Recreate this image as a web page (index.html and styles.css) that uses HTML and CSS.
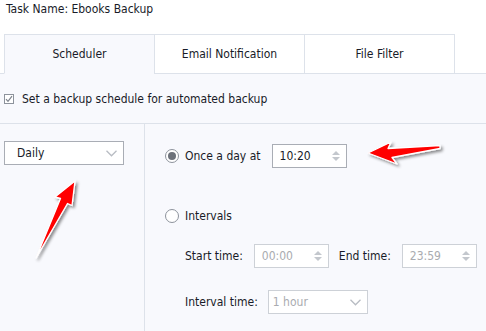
FILE: index.html
```html
<!DOCTYPE html>
<html lang="en">
<head>
    <meta charset="UTF-8">
    <meta name="viewport" content="width=device-width, initial-scale=1.0">
    <title>Ebooks Backup - Scheduler</title>
    <link rel="stylesheet" href="styles.css">
</head>
<body>
    <div class="task-name">Task Name: Ebooks Backup</div>

    <div class="tabs">
        <div class="tab active">Scheduler</div>
        <div class="tab">Email Notification</div>
        <div class="tab">File Filter</div>
    </div>

    <div class="panel">
        <div class="check-row">
            <span class="checkbox">
                <svg width="8" height="8" viewBox="0 0 8 8"><path d="M1 4.2 L3 6.3 L7 1.2" fill="none" stroke="#7c828b" stroke-width="1.2"/></svg>
            </span>
            Set a backup schedule for automated backup
        </div>

        <div class="schedule">
            <div class="side">
                <div class="select daily">
                    <span>Daily</span>
                    <svg class="chevron" width="11" height="7" viewBox="0 0 11 7"><path d="M0.5 0.8 L5.5 5.8 L10.5 0.8" fill="none" stroke="#b8bcc3" stroke-width="1.3"/></svg>
                </div>
            </div>

            <div class="options">
                <div class="row once">
                    <span class="radio checked"></span>
                    <span class="label">Once a day at</span>
                    <div class="timebox">
                        <span>10:20</span>
                        <span class="spin"><i class="up"></i><i class="down"></i></span>
                    </div>
                </div>

                <div class="row intervals">
                    <span class="radio"></span>
                    <span class="label">Intervals</span>
                </div>

                <div class="row sub range">
                    <span class="label">Start time:</span>
                    <div class="timebox disabled">
                        <span>00:00</span>
                        <span class="spin"><i class="up"></i><i class="down"></i></span>
                    </div>
                    <span class="label end-label">End time:</span>
                    <div class="timebox disabled">
                        <span>23:59</span>
                        <span class="spin"><i class="up"></i><i class="down"></i></span>
                    </div>
                </div>

                <div class="row sub interval">
                    <span class="label">Interval time:</span>
                    <div class="select disabled hour">
                        <span>1 hour</span>
                        <svg class="chevron" width="11" height="7" viewBox="0 0 11 7"><path d="M0.5 0.8 L5.5 5.8 L10.5 0.8" fill="none" stroke="#b8bcc3" stroke-width="1.3"/></svg>
                    </div>
                </div>
            </div>
        </div>
    </div>

    <!-- flechas rojas encima del contenido -->
    <svg class="arrows" width="486" height="331" viewBox="0 0 486 331">
        <defs>
            <filter id="sombra" x="-20%" y="-20%" width="140%" height="140%">
                <feDropShadow dx="2" dy="2" stdDeviation="1.6" flood-color="#000" flood-opacity="0.45"/>
            </filter>
        </defs>
        <polygon points="368,153 391,142 388,148.5 440,145.5 440,148.5 392,157.5 397,164"
                 fill="#ff0000" stroke="#fff" stroke-width="1.3" stroke-linejoin="round" filter="url(#sombra)"/>
        <polygon points="75,181 55,197 60.5,198.5 36,258 67.5,203.5 72,205.5"
                 fill="#ff0000" stroke="#fff" stroke-width="1.3" stroke-linejoin="round" filter="url(#sombra)"/>
    </svg>
</body>
</html>
```

FILE: styles.css
```css
body {
    font-family: 'DejaVu Sans Condensed', 'DejaVu Sans', sans-serif;
    font-size: 12px;
    color: #181b28;
    background-color: #fff;
    margin: 0;
    width: 486px;
    height: 331px;
    overflow: hidden;
    position: relative;
}

.task-name {
    padding: 1px 0 0 6px;
    line-height: 16px;
    height: 17px;
    box-sizing: border-box;
}

/* Pestañas */
.tabs {
    display: flex;
    margin-top: 17px;
    padding-left: 4px;
    height: 40px;
    box-sizing: border-box;
    border-bottom: 1px solid #dde2ea;
}

.tab {
    width: 151px;
    height: 40px;
    box-sizing: border-box;
    border: 1px solid #dde2ea;
    background: #fff;
    display: flex;
    align-items: center;
    justify-content: center;
}

.tab + .tab {
    margin-left: -1px;
}

.tab.active {
    background: #f8f9fd;
    border-bottom-color: #f8f9fd;
}

.panel {
    background: #f8f9fd;
    height: 257px;
}

.check-row {
    height: 50px;
    box-sizing: border-box;
    border-bottom: 1px solid #dde2ea;
    display: flex;
    align-items: center;
    padding: 1px 0 0 4px;
}

.checkbox {
    width: 10px;
    height: 10px;
    box-sizing: border-box;
    border: 1px solid #8d939c;
    background: #fff;
    display: inline-flex;
    align-items: center;
    justify-content: center;
    margin-right: 8px;
}

.schedule {
    display: flex;
    height: 207px;
}

.side {
    width: 145px;
    border-right: 1px solid #dde2ea;
    box-sizing: border-box;
    padding: 17px 0 0 4px;
}

.select, .timebox {
    height: 24px;
    box-sizing: border-box;
    border: 1px solid #a9adb5;
    background: #fff;
    display: flex;
    align-items: center;
    justify-content: space-between;
}

.select.daily {
    width: 120px;
    padding: 0 6px 0 12px;
}

.chevron {
    display: block;
}

.options {
    flex: 1;
    padding-left: 20px;
}

.row {
    display: flex;
    align-items: center;
    height: 24px;
}

.row.once {
    margin-top: 20px;
}

.row.intervals {
    margin-top: 36px;
}

.row.range {
    margin-top: 16px;
}

.row.interval {
    margin-top: 22px;
}

.row.sub {
    padding-left: 20px;
}

.radio {
    width: 14px;
    height: 14px;
    box-sizing: border-box;
    border: 1px solid #8d939c;
    border-radius: 50%;
    background: #fff;
    margin-right: 6px;
    display: inline-flex;
    align-items: center;
    justify-content: center;
}

.radio.checked::after {
    content: "";
    width: 8px;
    height: 8px;
    border-radius: 50%;
    background: #6c717a;
}

.once .timebox {
    margin-left: 11px;
}

.timebox {
    width: 75px;
    padding: 0 6px 0 7px;
}

.timebox.disabled, .select.disabled {
    border-color: #cdd1d7;
    color: #a9abb0;
}

.range .timebox {
    margin-left: 11px;
}

.end-label {
    margin-left: 10px;
}

.range .end-label + .timebox {
    margin-left: 11px;
}

.spin {
    display: flex;
    flex-direction: column;
    gap: 2px;
}

.spin i {
    display: block;
    width: 0;
    height: 0;
    border-left: 4px solid transparent;
    border-right: 4px solid transparent;
}

.spin .up {
    border-bottom: 4px solid #c3c7cd;
}

.spin .down {
    border-top: 4px solid #c3c7cd;
}

.select.hour {
    width: 100px;
    margin-left: 10px;
    padding: 0 6px 0 4px;
}

/* Flechas encima */
.arrows {
    position: absolute;
    top: 0;
    left: 0;
    pointer-events: none;
}
```
